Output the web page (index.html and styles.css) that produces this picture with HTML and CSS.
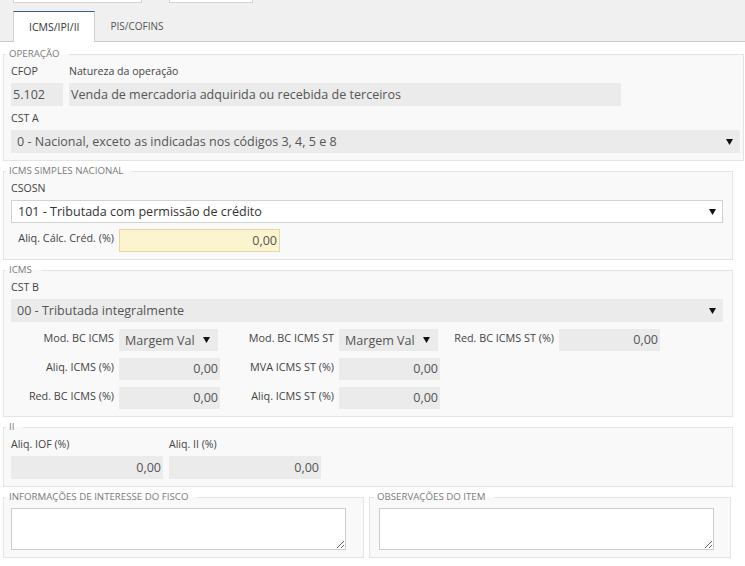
FILE: index.html
```html
<!DOCTYPE html>
<html lang="pt-BR">
<head>
<meta charset="utf-8">
<title>Item - impostos</title>
<link rel="stylesheet" href="styles.css">
</head>
<body>
<div class="tabbar">
  <div class="stubs"><span class="stub stub-1"></span><span class="stub stub-2"></span></div>
  <div class="tabs">
    <div class="tab tab-active">ICMS/IPI/II</div>
    <div class="tab">PIS/COFINS</div>
  </div>
</div>
<div class="content">
  <fieldset class="fs fs-op">
    <legend>Operação</legend>
    <div class="pair">
      <div class="cfop">
        <div class="lbl">CFOP</div>
        <div class="field ro">5.102</div>
      </div>
      <div class="nat">
        <div class="lbl">Natureza da operação</div>
        <div class="field ro">Venda de mercadoria adquirida ou recebida de terceiros</div>
      </div>
    </div>
    <div class="lbl lbl-next">CST A</div>
    <div class="select gray"><span>0 - Nacional, exceto as indicadas nos códigos 3, 4, 5 e 8</span><svg class="arrow" width="7" height="6" viewBox="0 0 7 6"><polygon points="0,0 7,0 3.5,6" /></svg></div>
  </fieldset>

  <fieldset class="fs fs-std">
    <legend>ICMS Simples Nacional</legend>
    <div class="lbl">CSOSN</div>
    <div class="select white"><span>101 - Tributada com permissão de crédito</span><svg class="arrow" width="7" height="6" viewBox="0 0 7 6"><polygon points="0,0 7,0 3.5,6" /></svg></div>
    <div class="inline-row">
      <div class="slbl">Aliq. Cálc. Créd. (%)</div>
      <div class="field num yellow">0,00</div>
    </div>
  </fieldset>

  <fieldset class="fs fs-std">
    <legend>ICMS</legend>
    <div class="lbl">CST B</div>
    <div class="select gray"><span>00 - Tributada integralmente</span><svg class="arrow" width="7" height="6" viewBox="0 0 7 6"><polygon points="0,0 7,0 3.5,6" /></svg></div>
    <div class="grid">
      <div class="slbl">Mod. BC ICMS</div>
      <div class="select gray small"><span>Margem Val</span><svg class="arrow" width="7" height="6" viewBox="0 0 7 6"><polygon points="0,0 7,0 3.5,6" /></svg></div>
      <div class="slbl">Mod. BC ICMS ST</div>
      <div class="select gray small"><span>Margem Val</span><svg class="arrow" width="7" height="6" viewBox="0 0 7 6"><polygon points="0,0 7,0 3.5,6" /></svg></div>
      <div class="slbl">Red. BC ICMS ST (%)</div>
      <div class="field num ro">0,00</div>

      <div class="slbl">Aliq. ICMS (%)</div>
      <div class="field num ro">0,00</div>
      <div class="slbl">MVA ICMS ST (%)</div>
      <div class="field num ro">0,00</div>
      <div></div>
      <div></div>

      <div class="slbl">Red. BC ICMS (%)</div>
      <div class="field num ro">0,00</div>
      <div class="slbl">Aliq. ICMS ST (%)</div>
      <div class="field num ro">0,00</div>
    </div>
  </fieldset>

  <fieldset class="fs fs-std">
    <legend>II</legend>
    <div class="pair">
      <div class="ii">
        <div class="lbl">Aliq. IOF (%)</div>
        <div class="field num ro">0,00</div>
      </div>
      <div class="ii">
        <div class="lbl">Aliq. II (%)</div>
        <div class="field num ro">0,00</div>
      </div>
    </div>
  </fieldset>

  <div class="bottom">
    <fieldset class="fs fs-info">
      <legend>Informações de interesse do fisco</legend>
      <textarea class="ta"></textarea>
    </fieldset>
    <fieldset class="fs fs-obs">
      <legend>Observações do item</legend>
      <textarea class="ta"></textarea>
    </fieldset>
  </div>
</div>
</body>
</html>
```

FILE: styles.css
```css
* { box-sizing: border-box; }
body {
  margin: 0;
  background: #fff;
  font-family: "Open Sans", "DejaVu Sans", sans-serif;
  color: #444;
}

/* tab bar */
.tabbar {
  display: flex;
  flex-direction: column;
  height: 42px;
  background: #f0f0f0;
  border-bottom: 1px solid #c9c9c9;
}
.stubs { display: flex; height: 3px; }
.stub {
  display: block;
  height: 3px;
  background: #fff;
  border: 1px solid #d4d4d4;
  border-top: none;
}
.stub-1 { margin-left: 13px; width: 129px; }
.stub-2 { margin-left: 27px; width: 84px; }
.tabs {
  display: flex;
  align-items: flex-end;
  margin-top: auto;
  padding-left: 13px;
}
.tab {
  height: 30px;
  line-height: 30px;
  padding: 0 15px 0 16px;
  font-size: 10px;
  color: #555;
}
.tab-active {
  height: 31px;
  margin-bottom: -1px;
  padding: 0 14px 0 15px;
  background: #fff;
  color: #333;
  font-size: 10.5px;
  border: 1px solid #cfcfcf;
  border-top: 1px solid #3a5d97;
  border-bottom: none;
}

/* content */
.content {
  display: flex;
  flex-direction: column;
  gap: 4px;
  padding-top: 6px;
}
.fs {
  margin: 0;
  min-width: 0;
  border: 1px solid #e4e4e4;
  background: #f9f9f9;
  padding: 0 9px 7px 7px;
}
.fs-op { margin: 0 1px 0 3px; padding-right: 3px; }
.fs-std { margin: 0 12px 0 3px; }
legend {
  font-size: 9.7px;
  line-height: 12px;
  color: #7a7a7a;
  text-transform: uppercase;
  padding: 0 9px 0 3px;
  margin-left: -5px;
}

.lbl {
  font-size: 10.6px;
  line-height: 16px;
  padding: 3px 0 4px;
  color: #444;
  white-space: nowrap;
}
.lbl-next { padding-top: 4px; }

.pair { display: flex; gap: 6px; }
.cfop { width: 52px; }
.nat { width: 552px; }
.ii { width: 152px; }

.field {
  height: 23px;
  line-height: 23px;
  font-size: 12.55px;
  color: #555;
  padding: 0 2px;
  white-space: nowrap;
  overflow: hidden;
}
.ro { background: #ebebeb; }
.num { text-align: right; }
.yellow {
  width: 161px;
  background: #fcf4cf;
  border: 1px solid #e4d9a4;
  line-height: 21px;
}

.select {
  display: flex;
  align-items: center;
  justify-content: space-between;
  height: 23px;
  padding: 0 7px 0 6px;
  font-size: 12.55px;
  white-space: nowrap;
}
.select.gray { background: #ebebeb; color: #555; }
.select.white { background: #fff; color: #333; border: 1px solid #d2d2d2; padding-right: 6px; }
.select.small { height: 22px; width: 99px; padding-right: 8px; }
.arrow { fill: #111; flex: none; }

.inline-row {
  display: flex;
  margin-top: 6px;
}
.slbl {
  font-size: 10.8px;
  line-height: 18px;
  color: #444;
  text-align: right;
  padding-right: 5px;
  white-space: nowrap;
}
.inline-row .slbl { width: 108px; }

.grid {
  display: grid;
  grid-template-columns: 108px 101px 119px 101px 119px 101px;
  grid-auto-rows: 22px;
  row-gap: 7px;
  margin-top: 7px;
}
.grid .field { height: 22px; line-height: 22px; }

.bottom {
  display: flex;
  gap: 5px;
  margin: 0 14px 0 3px;
}
.fs-info { width: 361px; padding-right: 0; }
.fs-obs { width: 362px; padding-left: 9px; }
.ta {
  display: block;
  width: 335px;
  height: 42px;
  margin-top: 5px;
  border: 1px solid #cdcdcd;
  background: #fff;
  font-family: inherit;
}
```
